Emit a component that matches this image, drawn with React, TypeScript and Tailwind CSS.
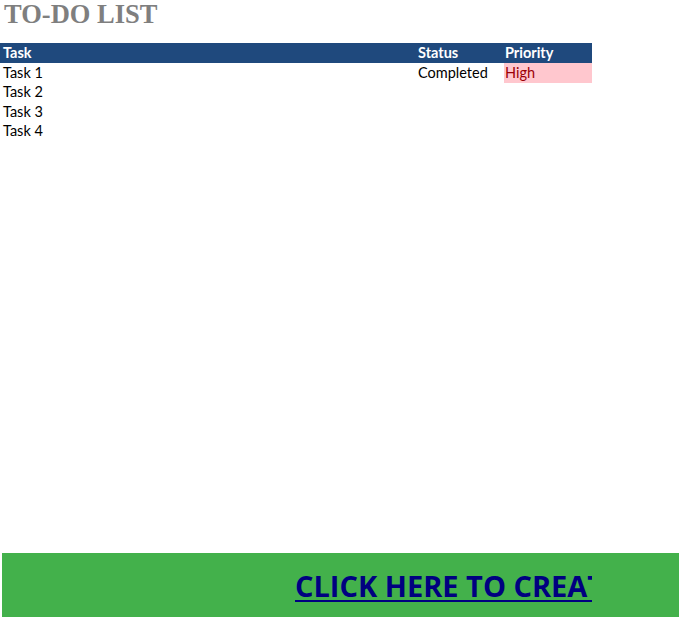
import React from 'react';

const tasks = [
  { name: 'Task 1', status: 'Completed', priority: 'High' },
  { name: 'Task 2', status: '', priority: '' },
  { name: 'Task 3', status: '', priority: '' },
  { name: 'Task 4', status: '', priority: '' },
];

export default function App() {
  return (
    <div className="w-[681px] h-[618px] bg-white flex flex-col overflow-hidden font-['Lato',sans-serif] text-black">
      <h1 className="h-[43px] pl-[4px] font-['Liberation_Serif',serif] font-bold text-[26.5px] leading-[28px] text-[#7f7f7f]">
        TO-DO LIST
      </h1>

      {/* Table */}
      <div className="w-[592px] flex flex-col text-[14.5px]">
        <div className="flex h-[20px] items-center bg-[#1f497d] text-white font-bold">
          <div className="w-[416px] pl-[3px]">Task</div>
          <div className="w-[88px] pl-[2px]">Status</div>
          <div className="flex-1 pl-[1px]">Priority</div>
        </div>
        {tasks.map((t) => (
          <div key={t.name} className="flex h-[19.5px] items-center">
            <div className="w-[416px] pl-[3px]">{t.name}</div>
            <div className="w-[88px] pl-[2px]">{t.status}</div>
            <div
              className={`flex-1 h-full flex items-center pl-[1px] ${
                t.priority === 'High' ? 'bg-[#ffc7ce] text-[#9c0006]' : ''
              }`}
            >
              {t.priority}
            </div>
          </div>
        ))}
      </div>

      <div className="flex-1" />

      {/* Banner */}
      <div className="mx-[2px] mb-[1px] h-[64px] bg-[#43b14b] flex items-center">
        <div className="ml-[293px] w-[297px] overflow-hidden whitespace-nowrap pt-[2px]">
          <a
            href="#"
            className="font-['Open_Sans',sans-serif] font-bold text-[29px] leading-[38px] text-[#000080] underline decoration-[2px] underline-offset-[3px]"
          >
            CLICK HERE TO CREATE IN SMARTSHEET
          </a>
        </div>
      </div>
    </div>
  );
}
